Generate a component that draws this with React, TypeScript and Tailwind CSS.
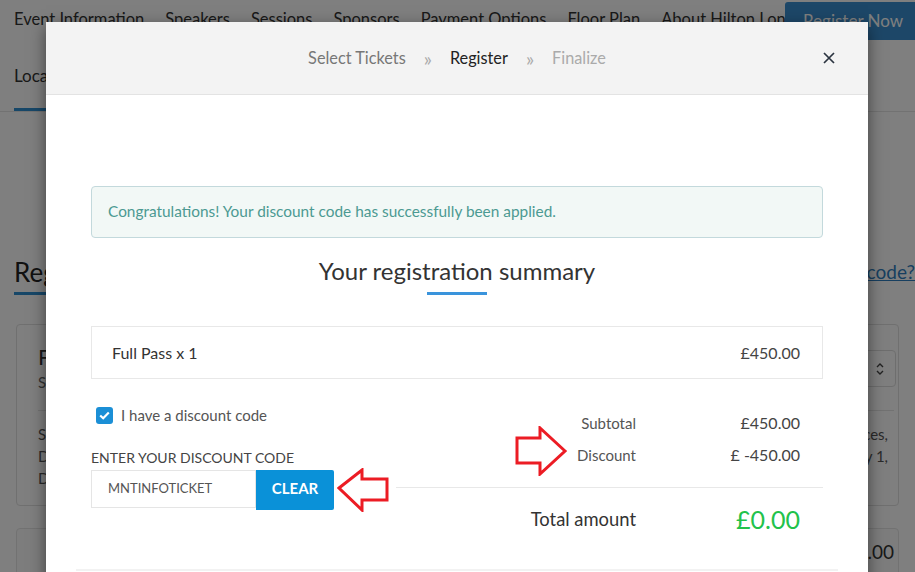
import React from "react";

const navItems = [
  "Event Information",
  "Speakers",
  "Sessions",
  "Sponsors",
  "Payment Options",
  "Floor Plan",
  "About Hilton London",
];

function Background() {
  return (
    <div className="h-[572px] overflow-hidden bg-white text-[#333]">
      <nav className="flex h-[40px] items-start">
        <div className="flex min-w-0 flex-1 gap-[21px] overflow-hidden whitespace-nowrap pl-[14px] pt-[7px] text-[16.5px]">
          {navItems.map((n) => (
            <span key={n}>{n}</span>
          ))}
        </div>
        <div className="mt-[2px] flex h-[38px] w-[130px] shrink-0 items-center rounded-tl-[3px] bg-[#3a8fd0] pl-[18px] text-[17px] text-white">
          Register Now
        </div>
      </nav>
      <div className="flex h-[72px] items-end border-b border-[#e5e5e5] pl-[14px]">
        <div className="border-b-[3px] border-[#2f8fd0] pb-[20px] text-[17px]">Location</div>
      </div>
      <div className="px-[14px] pt-[144px]">
        <div className="flex items-start justify-between">
          <div>
            <div className="text-[26px] leading-[32px] text-[#222]">Registration</div>
            <div className="mt-[4px] h-[3px] w-[80px] bg-[#2f8fd0]" />
          </div>
          <a className="mr-[-14px] pt-[2px] text-[19px] text-[#2f7fc0] underline">Have a discount code?</a>
        </div>
        <div className="mx-[2px] mt-[29px] h-[182px] rounded-[4px] border border-[#e0e0e0] pl-[21px] pr-[10px] pt-[18px]">
          <div className="flex items-start justify-between">
            <div>
              <div className="text-[22px] leading-[28px]">Full Pass</div>
              <div className="text-[15px] leading-[22px] text-[#666]">Standard registration</div>
            </div>
            <div className="mr-[-8px] mt-[7px] flex h-[37px] w-[60px] items-center justify-end rounded-[4px] border border-[#ddd] pr-[10px]">
              <svg width="10" height="14" viewBox="0 0 10 14" fill="none" stroke="#444" strokeWidth="1.4">
                <path d="M2 5 L5 2 L8 5" />
                <path d="M2 9 L5 12 L8 9" />
              </svg>
            </div>
          </div>
          <div className="mr-[-6px] mt-[17px] border-t border-[#e5e5e5]" />
          <div className="mt-[12px] text-[15px] leading-[22px] text-[#555]">
            <div className="flex justify-between">
              <span>Sessions, workshops and networking events</span>
              <span>places,</span>
            </div>
            <div className="flex justify-between">
              <span>Dates of the conference run from May</span>
              <span>July 1,</span>
            </div>
            <div>Details will be emailed</div>
          </div>
        </div>
        <div className="mx-[2px] mt-[22px] flex h-[60px] justify-end rounded-t-[4px] border border-[#e5e5e5] bg-[#fafafa] pr-[4px] pt-[9px] text-[19px] text-[#333]">
          £450.00
        </div>
      </div>
    </div>
  );
}

function Arrow({ dir }: { dir: "left" | "right" }) {
  if (dir === "left") {
    return (
      <svg width="52" height="44" viewBox="0 0 52 44" className="absolute left-[291px] top-[446px]">
        <polygon
          points="2,20 25,2 25,11 50,11 50,32 25,32 25,42"
          fill="white"
          stroke="#ec1c24"
          strokeWidth="3"
          strokeLinejoin="miter"
        />
      </svg>
    );
  }
  return (
    <svg width="52" height="50" viewBox="0 0 52 50" className="absolute left-[469px] top-[404px]">
      <polygon
        points="50,25 25,2 25,12 2,12 2,37 25,37 25,48"
        fill="white"
        stroke="#ec1c24"
        strokeWidth="3"
        strokeLinejoin="miter"
      />
    </svg>
  );
}

export default function App() {
  return (
    <div className="relative h-[572px] w-full overflow-hidden font-['Lato',sans-serif]">
      <Background />
      <div className="absolute inset-0 bg-black/50" />
      <div className="absolute left-[46px] top-[22px] w-[822px] bg-white shadow-[0_5px_15px_rgba(0,0,0,0.5)]">
        <div className="grid h-[73px] grid-cols-[1fr_auto_1fr] items-center border-b border-[#e3e3e3] bg-[#f3f3f3]">
          <div />
          <div className="flex items-center text-[16.3px]">
            <span className="text-[#777]">Select Tickets</span>
            <span className="mx-[18px] text-[19px] leading-none text-[#aaa]">»</span>
            <span className="text-[#222]">Register</span>
            <span className="mx-[18px] text-[19px] leading-none text-[#aaa]">»</span>
            <span className="text-[#aaa]">Finalize</span>
          </div>
          <div className="flex justify-end pr-[33px]">
            <svg width="12" height="12" viewBox="0 0 12 12" stroke="#2b3440" strokeWidth="1.7">
              <path d="M1 1 L11 11 M11 1 L1 11" />
            </svg>
          </div>
        </div>
        <div className="px-[45px] pt-[91px]">
          <div className="flex h-[52px] items-center rounded-[4px] border border-[#c3d9dc] bg-[#f2f8f6] px-[16px] text-[15.4px] text-[#4c9a92]">
            Congratulations! Your discount code has successfully been applied.
          </div>
          <div className="mt-[18px] text-center text-[24px] leading-[30px] text-[#333]">
            Your registration summary
          </div>
          <div className="mx-auto mt-[6px] h-[3px] w-[60px] bg-[#3a94dc]" />
          <div className="mt-[31px] flex h-[53px] items-center justify-between border border-[#e8e8e8] pl-[20px] pr-[22px] text-[16px]">
            <span className="text-[#333]">Full Pass x 1</span>
            <span className="text-[#444]">£450.00</span>
          </div>
          <div className="mt-[28px] grid grid-cols-[305px_1fr]">
            <div>
              <div className="flex h-[17px] items-center pl-[5px]">
                <span className="flex h-[17px] w-[17px] items-center justify-center rounded-[3px] bg-[#1b8fd6]">
                  <svg width="11" height="9" viewBox="0 0 11 9" fill="none" stroke="white" strokeWidth="2.2">
                    <path d="M1.2 4.5 L4.2 7.2 L9.8 1.5" />
                  </svg>
                </span>
                <span className="ml-[8px] text-[15px] leading-[17px] text-[#555]">I have a discount code</span>
              </div>
              <div className="mt-[25px] text-[14px] uppercase leading-[18px] text-[#444]">
                Enter your discount code
              </div>
              <div className="mt-[3px] flex items-start">
                <div className="flex h-[38px] w-[165px] items-center border border-[#e5e5e5] pl-[16px] text-[13px] text-[#555]">
                  MNTINFOTICKET
                </div>
                <button className="flex h-[40px] w-[78px] items-center justify-center rounded-r-[2px] bg-[#0a91d8] pb-[3px] text-[15px] font-bold text-white">
                  CLEAR
                </button>
              </div>
            </div>
            <div>
              <div className="grid grid-cols-[240px_1fr] pr-[23px] text-[15px] leading-[32px]">
                <span className="text-right text-[#555]">Subtotal</span>
                <span className="text-right text-[16px] text-[#444]">£450.00</span>
                <span className="text-right text-[#555]">Discount</span>
                <span className="text-right text-[16px] text-[#444]">£ -450.00</span>
              </div>
              <div className="mt-[16px] grid h-[65px] grid-cols-[240px_1fr] items-center border-t border-[#e8e8e8] pr-[23px]">
                <span className="text-right text-[18.4px] text-[#333]">Total amount</span>
                <span className="text-right text-[25px] text-[#22c24b]">£0.00</span>
              </div>
            </div>
          </div>
        </div>
        <div className="mx-[30px] mt-[17px] h-[40px] border-t-2 border-[#f2f2f2]" />
        <Arrow dir="left" />
        <Arrow dir="right" />
      </div>
    </div>
  );
}
